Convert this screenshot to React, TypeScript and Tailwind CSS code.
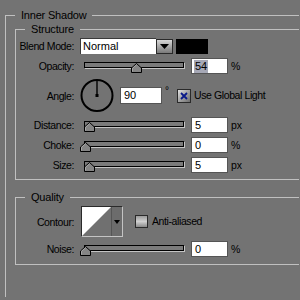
import React from "react";

function Header({ title }: { title: string }) {
  return (
    <div className="flex h-[12px] shrink-0">
      <div className="w-[10px] mt-[6px] border-l border-t border-[#c0c0c0]" />
      <span className="px-[6px] text-[11px] leading-[12px] text-black tracking-[-0.2px] whitespace-nowrap">
        {title}
      </span>
      <div className="flex-1 mt-[6px] border-t border-[#c0c0c0]" />
    </div>
  );
}

function Label({ text }: { text: string }) {
  return (
    <div className="w-[58px] shrink-0 text-right text-[10.5px] leading-[12px] tracking-[-0.4px] text-black whitespace-nowrap">
      {text}
    </div>
  );
}

function Thumb({ pos }: { pos: string }) {
  return (
    <svg className={`absolute top-[5px] ${pos}`} width="11" height="10" viewBox="0 0 11 10">
      <path d="M5.5 0.5 L10.5 5 V9.5 H0.5 V5 Z" fill="#858585" stroke="#000" strokeWidth="1" />
      <path d="M5.5 1.8 L1.5 5.3 V8.5" fill="none" stroke="#a8a8a8" strokeWidth="1" />
    </svg>
  );
}

function Slider({ pos }: { pos: string }) {
  return (
    <div className="relative ml-[6px] w-[104px] h-[16px] shrink-0">
      <div className="ml-[4px] mt-[4px] w-[100px] h-[6px] border border-black bg-[#7b7b7b] shadow-[1px_1px_0_#c4c4c4]" />
      <Thumb pos={pos} />
    </div>
  );
}

function Field({ value, selected, w }: { value: string; selected?: boolean; w: string }) {
  return (
    <div
      className={`${w} h-[16px] shrink-0 bg-white border border-[#555555] pl-[2px] flex items-center text-[11px] text-black`}
    >
      {selected ? <span className="bg-[#a6a8b6] px-[1px] leading-[13px]">{value}</span> : <span className="px-[1px]">{value}</span>}
    </div>
  );
}

function Unit({ text }: { text: string }) {
  return <span className="ml-[3px] text-[10.5px] leading-[12px] text-black">{text}</span>;
}

function SliderRow({ label, pos, value, unit, selected, mt }: { label: string; pos: string; value: string; unit: string; selected?: boolean; mt: string }) {
  return (
    <div className={`flex items-center h-[16px] ${mt}`}>
      <Label text={label} />
      <Slider pos={pos} />
      <div className="ml-[7px]">
        <Field value={value} selected={selected} w="w-[37px]" />
      </div>
      <Unit text={unit} />
    </div>
  );
}

export default function App() {
  return (
    <div className="w-[300px] h-[300px] overflow-hidden bg-[#737373] pl-[5px] pt-[9px] pr-[1px] pb-[3px] flex flex-col font-['Liberation_Sans',Arial,sans-serif]">
      <Header title="Inner Shadow" />
      <div className="flex-1 border-l border-[#c0c0c0] pl-[9px] pt-[2px] flex flex-col">
        {/* Structure */}
        <Header title="Structure" />
        <div className="border-l border-b border-[#c0c0c0] pb-[6px] flex flex-col">
          <div className="flex items-center h-[16px] mt-[3px]">
            <Label text="Blend Mode:" />
            <div className="ml-[6px] flex items-center">
              <div className="w-[76px] h-[16px] bg-white border-t border-l border-[#3a3a3a] pl-[2px] text-[11px] leading-[15px] text-black">
                Normal
              </div>
              <div className="w-[17px] h-[15px] border border-[#2a2a2a] bg-gradient-to-b from-[#d8d8d8] via-[#a8a8a8] to-[#7a7a7a] flex items-center justify-center">
                <svg width="9" height="5" viewBox="0 0 9 5">
                  <path d="M0 0 H9 L4.5 5 Z" fill="#000" />
                </svg>
              </div>
              <div className="ml-[3px] w-[32px] h-[15px] bg-black" />
            </div>
          </div>

          <SliderRow label="Opacity:" pos="left-[51px]" value="54" unit="%" selected mt="mt-[4px]" />

          <div className="flex items-center h-[35px] mt-[4px]">
            <Label text="Angle:" />
            <svg className="ml-[6px] shrink-0" width="34" height="35" viewBox="0 0 34 35">
              <circle cx="17" cy="17.5" r="15.5" fill="none" stroke="#000" strokeWidth="2" />
              <line x1="17" y1="17.5" x2="17" y2="2" stroke="#000" strokeWidth="1.4" />
              <rect x="15.5" y="16" width="3" height="3" fill="#000" />
            </svg>
            <div className="ml-[6px]">
              <div className="w-[42px] h-[17px] bg-white border border-[#555555] pl-[3px] flex items-center text-[11px] text-black">
                90
              </div>
            </div>
            <span className="w-[15px] pl-[3px] self-start mt-[8px] text-[10px] leading-[10px] text-black">°</span>
            <div className="w-[14px] h-[14px] border border-[#2a2a2a] bg-gradient-to-br from-[#e4e4e4] via-[#a4a4a4] to-[#6e6e6e] flex items-center justify-center">
              <svg width="8" height="8" viewBox="0 0 8 8">
                <path d="M1 1 L7 7 M7 1 L1 7" stroke="#0a1a8a" strokeWidth="1.8" />
              </svg>
            </div>
            <span className="ml-[3px] text-[10.5px] tracking-[-0.4px] text-black whitespace-nowrap">Use Global Light</span>
          </div>

          <SliderRow label="Distance:" pos="left-[4px]" value="5" unit="px" mt="mt-[4px]" />
          <SliderRow label="Choke:" pos="left-0" value="0" unit="%" mt="mt-[4px]" />
          <SliderRow label="Size:" pos="left-[4px]" value="5" unit="px" mt="mt-[4px]" />
        </div>

        {/* Quality */}
        <div className="mt-[11px]">
          <Header title="Quality" />
        </div>
        <div className="border-l border-b border-[#c0c0c0] pb-[7px] flex flex-col">
          <div className="flex items-center h-[31px] mt-[3px]">
            <Label text="Contour:" />
            <div className="ml-[7px] w-[42px] h-[31px] flex border-t border-l border-t-[#2a2a2a] border-l-[#2a2a2a] border-r border-b border-r-[#c4c4c4] border-b-[#c4c4c4]">
              <svg width="29" height="29" viewBox="0 0 29 29" className="shrink-0">
                <rect width="29" height="29" fill="#707070" />
                <path d="M0 0 H29 L0 29 Z" fill="#fff" />
              </svg>
              <div className="flex-1 bg-[#6c6c6c] border-l border-[#555555] flex items-center justify-center">
                <svg width="6" height="4" viewBox="0 0 6 4">
                  <path d="M0 0 H6 L3 4 Z" fill="#000" />
                </svg>
              </div>
            </div>
            <div className="ml-[12px] w-[13px] h-[13px] border border-[#2a2a2a] bg-gradient-to-b from-[#9a9a9a] via-[#d0d0d0] to-[#8a8a8a]" />
            <span className="ml-[4px] text-[10.5px] tracking-[-0.4px] text-black whitespace-nowrap">Anti-aliased</span>
          </div>
          <SliderRow label="Noise:" pos="left-0" value="0" unit="%" mt="mt-[4px]" />
        </div>
      </div>
    </div>
  );
}
